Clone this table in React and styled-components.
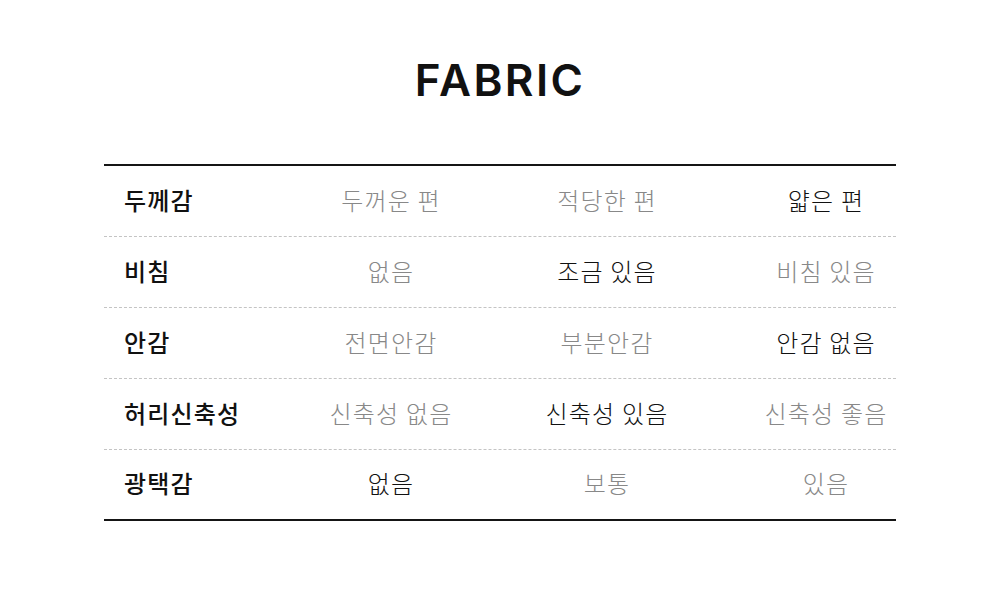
import React from 'react';
import styled, { createGlobalStyle } from 'styled-components';

const GlobalStyle = createGlobalStyle`
  html, body {
    margin: 0;
    padding: 0;
    background: #ffffff;
  }
  body {
    font-family: "Noto Sans CJK KR", "Noto Sans", sans-serif;
  }
`;

const Page = styled.div`
  width: 1000px;
  height: 604px;
  display: flex;
  flex-direction: column;
  align-items: center;
  padding-top: 53px;
  box-sizing: border-box;
`;

const Title = styled.h1`
  margin: 0;
  font-family: Inter, "Liberation Sans", sans-serif;
  font-weight: 600;
  font-size: 44px;
  line-height: 54px;
  letter-spacing: 2.4px;
  color: #111;
`;

const Table = styled.div`
  width: 792px;
  margin-top: 57px;
  border-top: 2px solid #151515;
  border-bottom: 2px solid #151515;
`;

const Row = styled.div`
  display: grid;
  grid-template-columns: 220px 134px 298px 140px;
  align-items: center;
  height: 71px;
  padding-bottom: 4px;
  box-sizing: border-box;
  border-bottom: 1px dashed #c4c4c4;

  &:last-child {
    border-bottom: none;
    height: 69px;
  }
`;

const Label = styled.div`
  padding-left: 20px;
  font-size: 24px;
  font-weight: 500;
  letter-spacing: 1.2px;
  color: #111;
  white-space: nowrap;
`;

const Cell = styled.div`
  text-align: center;
  font-size: 24px;
  font-weight: 300;
  letter-spacing: 1.2px;
  white-space: nowrap;
  color: ${p => (p.$on ? '#111' : '#888888')};
`;

const rows = [
  { label: '두께감', values: ['두꺼운 편', '적당한 편', '얇은 편'], on: 2 },
  { label: '비침', values: ['없음', '조금 있음', '비침 있음'], on: 1 },
  { label: '안감', values: ['전면안감', '부분안감', '안감 없음'], on: 2 },
  { label: '허리신축성', values: ['신축성 없음', '신축성 있음', '신축성 좋음'], on: 1 },
  { label: '광택감', values: ['없음', '보통', '있음'], on: 0 },
];

export default function App() {
  return (
    <>
      <GlobalStyle />
      <Page>
        <Title>FABRIC</Title>
        <Table>
          {rows.map(r => (
            <Row key={r.label}>
              <Label>{r.label}</Label>
              {r.values.map((v, i) => (
                <Cell key={v} $on={i === r.on}>{v}</Cell>
              ))}
            </Row>
          ))}
        </Table>
      </Page>
    </>
  );
}
